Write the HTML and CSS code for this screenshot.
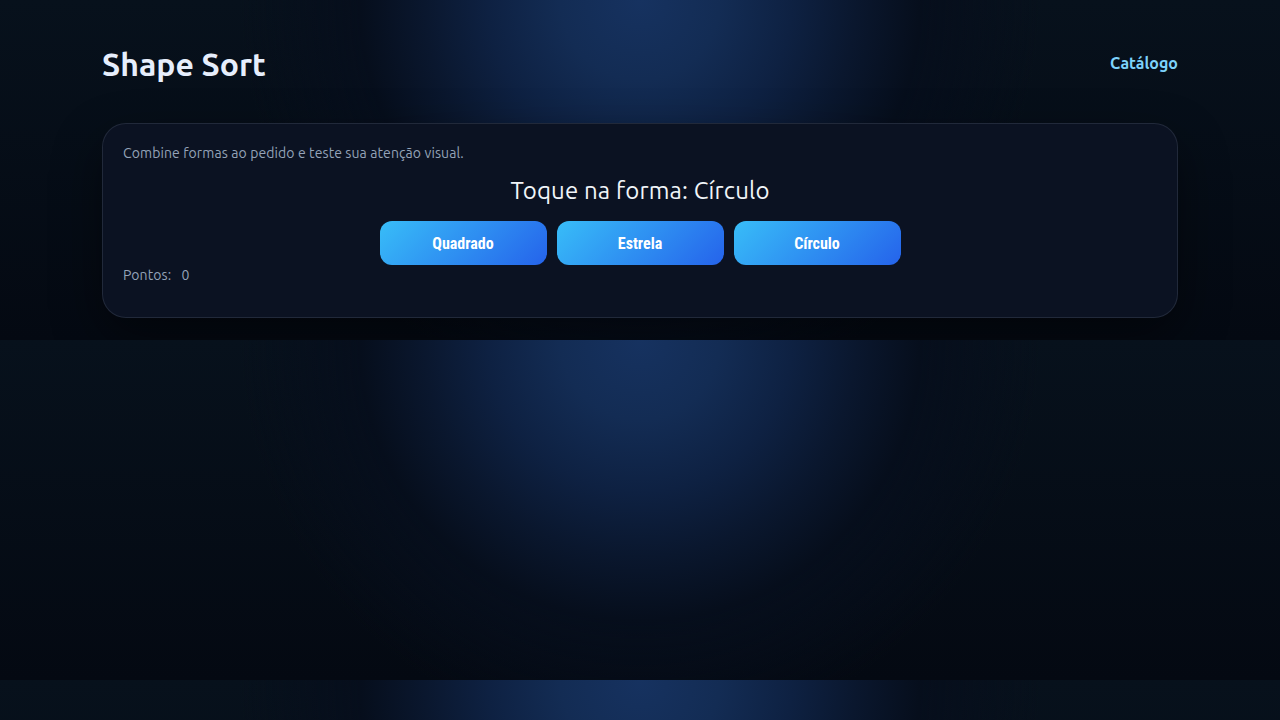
FILE: index.html
```html
<!DOCTYPE html>
<html lang="pt-BR">
<head>
<meta charset="utf-8">
<title>Shape Sort</title>
<link rel="stylesheet" href="styles.css">
</head>
<body>
<div class="page">
  <header class="header">
    <h1 class="title">Shape Sort</h1>
    <a class="nav-link" href="#">Catálogo</a>
  </header>
  <main class="card">
    <p class="desc">Combine formas ao pedido e teste sua atenção visual.</p>
    <h2 class="prompt">Toque na forma: Círculo</h2>
    <div class="choices">
      <button class="choice">Quadrado</button>
      <button class="choice">Estrela</button>
      <button class="choice">Círculo</button>
    </div>
    <p class="score">Pontos: <span class="score-value">0</span></p>
  </main>
</div>
</body>
</html>
```
FILE: styles.css
```css
html {
  background:
    radial-gradient(circle 400px at 50% 0, #163260 0%, #132c54 20%, #0e2142 38%, #0a172e 54%, #060e1c 70%, #04091300 100%),
    linear-gradient(180deg, #07111c 0%, #040912 100%);
}

body {
  margin: 0;
  font-family: Ubuntu, "Open Sans", sans-serif;
  color: #e2e8f0;
}

.page {
  max-width: 1076px;
  margin: 0 auto;
  padding: 40px 0 22px;
}

.header {
  height: 48px;
  display: flex;
  align-items: center;
  justify-content: space-between;
  margin-bottom: 35px;
}

.title {
  margin: 0;
  font-size: 32px;
  font-weight: 700;
  line-height: 40px;
  color: #e6eefc;
}

.nav-link {
  font-size: 16px;
  font-weight: 700;
  color: #7dd3fc;
  text-decoration: none;
  margin-top: -2px;
}

.card {
  display: block;
  background: #0b1222;
  border: 1px solid rgba(148, 163, 184, 0.16);
  border-radius: 24px;
  padding: 20px;
  box-shadow: 0 20px 50px rgba(0, 0, 0, 0.45);
}

.desc {
  margin: 0;
  font-size: 14px;
  line-height: 18px;
  letter-spacing: 0.1px;
  color: #94a3b8;
}

.prompt {
  margin: 14px 0 16px;
  font-size: 24px;
  line-height: 29px;
  font-weight: 400;
  letter-spacing: 0.15px;
  text-align: center;
  color: #f1f5f9;
}

.choices {
  display: flex;
  justify-content: center;
  gap: 10px;
}

.choice {
  width: 167px;
  height: 44px;
  border: 0;
  border-radius: 12px;
  background: linear-gradient(135deg, #38bdf8 0%, #2563eb 100%);
  color: #ffffff;
  font-family: "Roboto Condensed", "Liberation Sans", sans-serif;
  font-size: 16px;
  font-weight: 700;
  cursor: pointer;
}

.score {
  margin: 1px 0 13px;
  font-size: 14px;
  line-height: 18px;
  letter-spacing: 0.1px;
  color: #94a3b8;
}

.score-value {
  margin-left: 7px;
}
```
